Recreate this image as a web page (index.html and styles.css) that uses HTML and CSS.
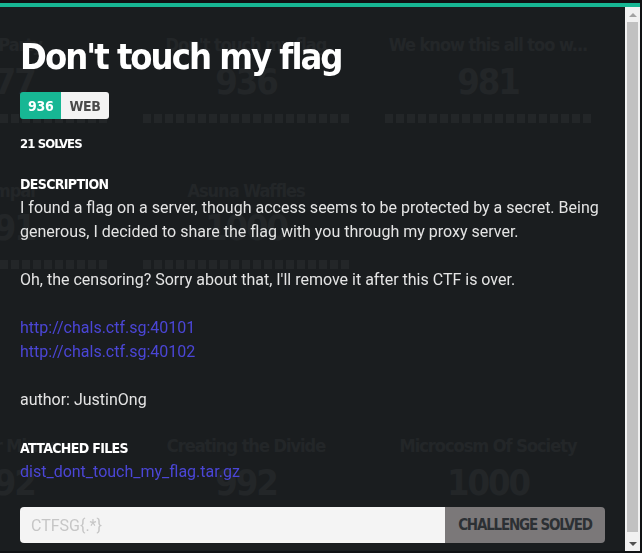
FILE: index.html
```html
<!DOCTYPE html>
<html lang="en">
<head>
<meta charset="utf-8">
<title>Don't touch my flag</title>
<link rel="stylesheet" href="styles.css">
</head>
<body>
<div class="board">
  <div class="board-row row-a">
    <div class="card"><div class="card-title">Tea Party</div><div class="card-pts">977</div><div class="card-dots"></div></div>
    <div class="card"><div class="card-title">Don't touch my flag</div><div class="card-pts">936</div><div class="card-dots"></div></div>
    <div class="card"><div class="card-title">We know this all too w...</div><div class="card-pts">981</div><div class="card-dots"></div></div>
  </div>
  <div class="board-row row-b">
    <div class="card"><div class="card-title">Sempai</div><div class="card-pts">991</div><div class="card-dots"></div></div>
    <div class="card"><div class="card-title">Asuna Waffles</div><div class="card-pts">1000</div><div class="card-dots"></div></div>
    <div class="card"></div>
  </div>
  <div class="board-row row-c">
    <div class="card"><div class="card-title">Mirror Mirror</div><div class="card-pts">992</div></div>
    <div class="card"><div class="card-title">Creating the Divide</div><div class="card-pts">992</div></div>
    <div class="card"><div class="card-title">Microcosm Of Society</div><div class="card-pts">1000</div></div>
  </div>
</div>

<div class="modal">
  <div class="modal-body">
    <h1 class="title">Don't touch my flag</h1>
    <div class="tags"><span class="tag tag-pts">936</span><span class="tag tag-cat">WEB</span></div>
    <div class="solves">21 SOLVES</div>
    <h3 class="label">DESCRIPTION</h3>
    <div class="desc">
      <p>I found a flag on a server, though access seems to be protected by a secret. Being generous, I decided to share the flag with you through my proxy server.</p>
      <p>Oh, the censoring? Sorry about that, I'll remove it after this CTF is over.</p>
      <p><a href="#">http://chals.ctf.sg:40101</a><br><a href="#">http://chals.ctf.sg:40102</a></p>
      <p>author: JustinOng</p>
    </div>
    <h3 class="label">ATTACHED FILES</h3>
    <a class="file" href="#">dist_dont_touch_my_flag.tar.gz</a>
    <form class="submit">
      <input class="flag-input" type="text" placeholder="CTFSG{.*}">
      <button class="solved-btn" type="button">CHALLENGE SOLVED</button>
    </form>
  </div>
  <div class="scrollbar">
    <div class="sb-btn"><span class="arrow-up"></span></div>
    <div class="sb-track"><div class="sb-thumb"></div></div>
    <div class="sb-btn"><span class="arrow-down"></span></div>
  </div>
</div>
</body>
</html>
```

FILE: styles.css
```css
html, body {
  margin: 0;
  padding: 0;
}

body {
  width: 642px;
  height: 553px;
  overflow: hidden;
  background: #101214;
  font-family: Roboto, "Liberation Sans", sans-serif;
}

/* ghost challenge board behind the modal */
.board {
  margin-left: -111px;
  font-family: "DejaVu Sans Condensed", sans-serif;
  font-weight: bold;
  color: #7c8084;
}

.board-row {
  display: grid;
  grid-template-columns: repeat(3, 230px);
  column-gap: 12px;
}

.row-a { padding-top: 34px; }
.row-b { padding-top: 57px; }
.row-c { padding-top: 166px; }

.card {
  display: flex;
  flex-direction: column;
  align-items: center;
}

.card-title {
  font-size: 18px;
  line-height: 22px;
  letter-spacing: -1px;
  white-space: nowrap;
}

.card-pts {
  font-size: 36px;
  line-height: 40px;
  letter-spacing: -2px;
  margin-top: 6px;
}

.card-dots {
  margin-top: 12px;
  width: 206px;
  height: 9px;
  background: repeating-linear-gradient(90deg, #7c8084 0 8px, transparent 8px 11px);
}

/* modal */
.modal {
  position: fixed;
  left: 0;
  top: 3px;
  width: 640px;
  height: 548px;
  box-sizing: border-box;
  border-top: 4px solid #17b794;
  background: rgba(27, 30, 33, 0.92);
  display: flex;
}

.modal-body {
  flex: 1;
  min-width: 0;
  overflow: hidden;
  padding: 26px 20px 21px 20px;
  color: #e4e4e4;
}

.title {
  margin: 0;
  font-family: "DejaVu Sans Condensed", sans-serif;
  font-weight: bold;
  font-size: 36px;
  line-height: 48px;
  letter-spacing: -2px;
  color: #ffffff;
}

.tags {
  display: flex;
  margin-top: 11px;
}

.tag {
  display: flex;
  align-items: center;
  height: 27px;
  padding: 0 8px;
  font-family: "DejaVu Sans Condensed", sans-serif;
  font-weight: bold;
  font-size: 14px;
  letter-spacing: -0.3px;
}

.tag-pts {
  background: #17b794;
  color: #ffffff;
  border-radius: 3px 0 0 3px;
}

.tag-cat {
  background: #f3f3f3;
  color: #4a4a4a;
  border-radius: 0 3px 3px 0;
}

.solves {
  margin-top: 15px;
  font-family: "DejaVu Sans Condensed", sans-serif;
  font-weight: bold;
  font-size: 13px;
  line-height: 20px;
  letter-spacing: -0.9px;
  color: #ffffff;
}

.label {
  margin: 18px 0 0 0;
  font-family: "DejaVu Sans Condensed", sans-serif;
  font-weight: bold;
  font-size: 14px;
  line-height: 24px;
  letter-spacing: -0.65px;
  color: #ffffff;
}

.desc {
  font-size: 16px;
  line-height: 24px;
}

.desc p {
  margin: 0 0 24px 0;
}

.desc + .label {
  margin-top: 0;
}

a {
  color: #4b46d6;
  text-decoration: none;
}

.file {
  display: block;
  font-size: 16px;
  line-height: 24px;
}

.submit {
  display: flex;
  margin: 23px 0 0 0;
  height: 36px;
}

.flag-input {
  flex: 1;
  min-width: 0;
  border: none;
  outline: none;
  margin: 0;
  padding: 0 11px;
  background: #f4f4f4;
  border-radius: 4px 0 0 4px;
  font-family: Roboto, sans-serif;
  font-size: 16px;
  color: #333;
}

.flag-input::placeholder {
  color: #c6c6c6;
}

.solved-btn {
  flex: 0 0 160px;
  border: none;
  margin: 0;
  padding: 0;
  background: #7b7879;
  color: #2c3034;
  border-radius: 0 4px 4px 0;
  font-family: "DejaVu Sans Condensed", sans-serif;
  font-weight: bold;
  font-size: 15px;
  letter-spacing: -1.2px;
  white-space: nowrap;
}

/* scrollbar */
.scrollbar {
  flex: 0 0 15px;
  display: flex;
  flex-direction: column;
  background: #f1f1f1;
}

.sb-btn {
  flex: 0 0 15px;
  display: flex;
  align-items: center;
  justify-content: center;
}

.arrow-up {
  width: 0;
  height: 0;
  border-left: 4px solid transparent;
  border-right: 4px solid transparent;
  border-bottom: 4px solid #a3a3a3;
}

.arrow-down {
  width: 0;
  height: 0;
  border-left: 4px solid transparent;
  border-right: 4px solid transparent;
  border-top: 4px solid #505050;
}

.sb-track {
  flex: 1;
  display: flex;
  flex-direction: column;
  padding: 0 2px 4px 2px;
}

.sb-thumb {
  flex: 1;
  background: #c1c1c1;
}
```
